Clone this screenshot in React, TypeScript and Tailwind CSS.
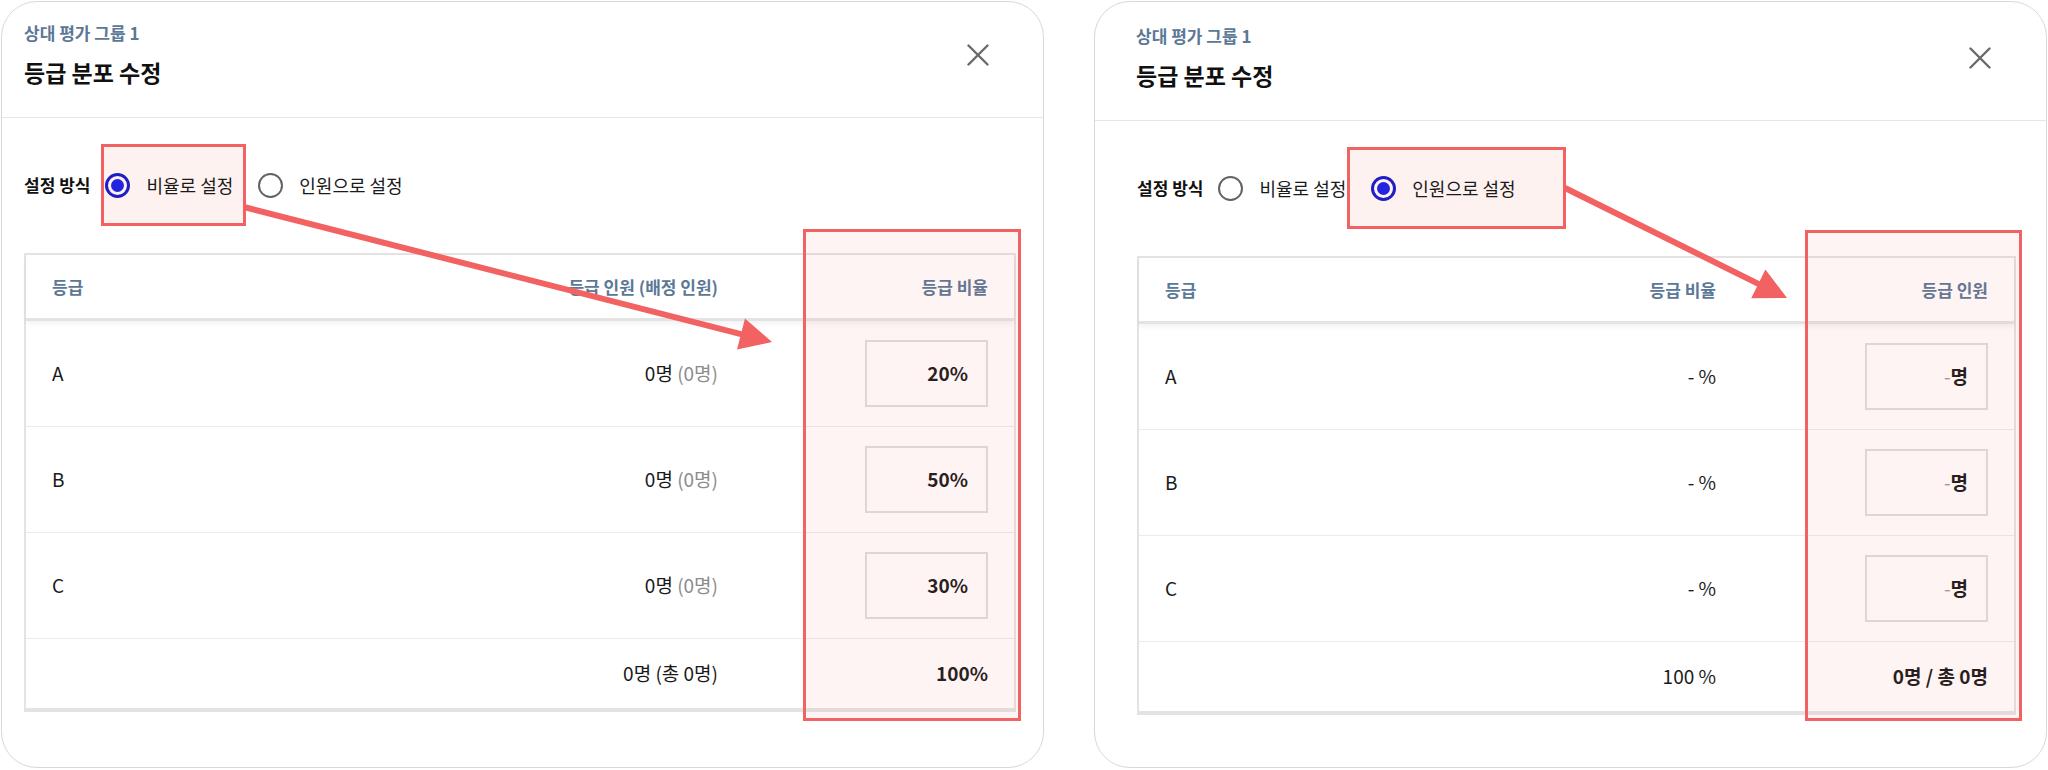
import React from "react";

type Mode = "ratio" | "count";

type CardConfig = {
  mode: Mode;
  card: string;
  header: string;
  close: string;
  body: string;
  col3: string;
  column: string;
  pick: string;
  arrow: [number, number, number, number];
};

const CARDS: CardConfig[] = [
  {
    mode: "ratio",
    card: "w-[1043px]",
    header: "h-[116px] pl-[22px] pt-[19px]",
    close: "mt-[23px] mr-[54px]",
    body: "pl-[22px] pr-[27px] pt-[54px]",
    col3: "w-[270px]",
    column: "-top-[26px] -bottom-[13px] -right-[7px] w-[218px]",
    pick: "-left-[4px] -right-[13px]",
    arrow: [242, 205, 770, 340],
  },
  {
    mode: "count",
    card: "w-[953px]",
    header: "h-[119px] pl-[41px] pt-[22px]",
    close: "mt-[23px] mr-[55px]",
    body: "pl-[42px] pr-[30px] pt-[54px]",
    col3: "w-[272px]",
    column: "-top-[28px] -bottom-[10px] -right-[8px] w-[217px]",
    pick: "-left-[24px] -right-[50px]",
    arrow: [470, 186, 692, 296],
  },
];

const GRADES = [
  { grade: "A", ratio: "20%" },
  { grade: "B", ratio: "50%" },
  { grade: "C", ratio: "30%" },
];

function Radio({ checked }: { checked: boolean }) {
  if (checked) {
    return (
      <span className="flex h-[25px] w-[25px] shrink-0 items-center justify-center rounded-full border-[3px] border-[#1e1ec4]">
        <span className="h-[13px] w-[13px] rounded-full bg-[#2424e0]" />
      </span>
    );
  }
  return <span className="h-[25px] w-[25px] shrink-0 rounded-full border-[2.5px] border-[#636363]" />;
}

function CloseIcon() {
  return (
    <svg width="22" height="22" viewBox="0 0 22 22" fill="none">
      <path d="M1.5 1.5L20.5 20.5M20.5 1.5L1.5 20.5" stroke="#6a6a6a" strokeWidth="2.4" strokeLinecap="round" />
    </svg>
  );
}

function Arrow({ coords }: { coords: [number, number, number, number] }) {
  const [x1, y1, x2, y2] = coords;
  const len = Math.hypot(x2 - x1, y2 - y1);
  const ux = (x2 - x1) / len;
  const uy = (y2 - y1) / len;
  const bx = x2 - ux * 32;
  const by = y2 - uy * 32;
  const head = `${x2},${y2} ${bx - uy * 16},${by + ux * 16} ${bx + uy * 16},${by - ux * 16}`;
  return (
    <svg className="pointer-events-none absolute inset-0 z-20 h-full w-full overflow-visible">
      <line x1={x1} y1={y1} x2={bx + ux * 4} y2={by + uy * 4} stroke="#f26262" strokeWidth="6" />
      <polygon points={head} fill="#f26262" />
    </svg>
  );
}

function Option({ label, checked, pick, className }: { label: string; checked: boolean; pick?: string; className: string }) {
  return (
    <div className={`relative flex items-center ${className}`}>
      {pick && (
        <div className={`absolute top-1/2 h-[82px] -translate-y-1/2 border-[3px] border-[#f26262] bg-[#fef2f1] ${pick}`} />
      )}
      <div className={`flex items-center ${pick ? "relative z-10" : ""}`}>
        <Radio checked={checked} />
        <span className="ml-[16px] text-[18px] leading-[24px] text-[#1a1a1a]">{label}</span>
      </div>
    </div>
  );
}

function InputBox({ children }: { children: React.ReactNode }) {
  return (
    <div className="flex h-[67px] w-[123px] items-center justify-end border-2 border-[#dedede] pr-[18px] text-[19px] font-bold text-[#1a1a1a]">
      {children}
    </div>
  );
}

function Card({ cfg }: { cfg: CardConfig }) {
  const ratio = cfg.mode === "ratio";
  return (
    <div className={`relative h-[767px] shrink-0 rounded-[36px] border border-[#d8d8d8] bg-white ${cfg.card}`}>
      {/* header */}
      <div className={`flex items-start justify-between border-b border-[#e6e6e6] ${cfg.header}`}>
        <div>
          <p className="text-[17px] font-bold leading-[24px] text-[#5b7896]">상대 평가 그룹 1</p>
          <h2 className="mt-[12px] text-[23px] font-bold leading-[30px] text-[#111]">등급 분포 수정</h2>
        </div>
        <div className={cfg.close}>
          <CloseIcon />
        </div>
      </div>

      <div className={cfg.body}>
        {/* setting mode */}
        <div className="flex h-[26px] items-center">
          <span className="text-[17px] font-bold leading-[24px] text-[#111]">설정 방식</span>
          <Option label="비율로 설정" checked={ratio} pick={ratio ? cfg.pick : undefined} className="ml-[15px]" />
          <Option label="인원으로 설정" checked={!ratio} pick={ratio ? undefined : cfg.pick} className="ml-[25px]" />
        </div>

        {/* table */}
        <div className="relative mt-[55px] border-2 border-b-4 border-[#e3e3e3]">
          <div className="relative z-[1] flex h-[66px] items-center border-b-[3px] border-[#e3e3e3] bg-white text-[17px] font-bold text-[#5b7896] shadow-[0_3px_5px_rgba(0,0,0,0.05)]">
            <div className="flex-1 pl-[26px]">등급</div>
            <div className="pr-[26px] text-right">{ratio ? "등급 인원 (배정 인원)" : "등급 비율"}</div>
            <div className={`pr-[26px] text-right ${cfg.col3}`}>{ratio ? "등급 비율" : "등급 인원"}</div>
          </div>

          {GRADES.map((g) => (
            <div key={g.grade} className="flex h-[106px] items-center border-b border-[#ebebeb] text-[19px] text-[#1a1a1a]">
              <div className="flex-1 pl-[26px]">{g.grade}</div>
              <div className="pr-[26px] text-right">
                {ratio ? (
                  <>
                    0명 <span className="text-[#8c8c8c]">(0명)</span>
                  </>
                ) : (
                  "- %"
                )}
              </div>
              <div className={`flex justify-end pr-[26px] ${cfg.col3}`}>
                <InputBox>
                  {ratio ? (
                    g.ratio
                  ) : (
                    <>
                      <span className="font-normal text-[#9a9a9a]">-</span>명
                    </>
                  )}
                </InputBox>
              </div>
            </div>
          ))}

          <div className="flex h-[69px] items-center text-[19px] text-[#1a1a1a]">
            <div className="flex-1" />
            <div className="pr-[26px] text-right">{ratio ? "0명 (총 0명)" : "100 %"}</div>
            <div className={`pr-[26px] text-right font-bold ${cfg.col3}`}>{ratio ? "100%" : "0명 / 총 0명"}</div>
          </div>

          {/* highlighted column */}
          <div className={`pointer-events-none absolute z-10 border-[3px] border-[#f26262] bg-[rgba(242,98,98,0.07)] ${cfg.column}`} />
        </div>
      </div>

      <Arrow coords={cfg.arrow} />
    </div>
  );
}

export default function App() {
  return (
    <div className="flex h-[770px] w-[2048px] items-start gap-[50px] bg-white pl-[1px] pt-[1px] font-['Noto_Sans_CJK_KR','Noto_Sans',sans-serif]">
      {CARDS.map((cfg) => (
        <Card key={cfg.mode} cfg={cfg} />
      ))}
    </div>
  );
}
